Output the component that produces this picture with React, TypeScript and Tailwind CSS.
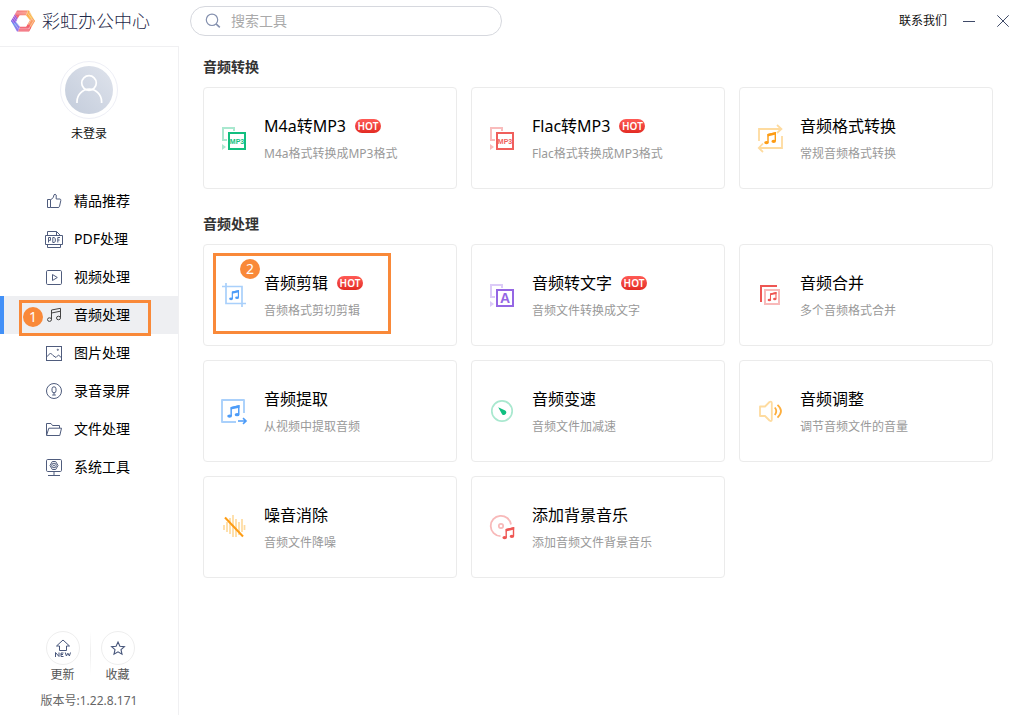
import type { ReactNode } from "react";

function Note({ x, y, s, color }: { x: number; y: number; s: number; color: string }) {
  return (
    <g transform={`translate(${x} ${y}) scale(${s / 12})`}>
      <path d="M4 10.5V2.6L11.3 .9V9" fill="none" stroke={color} strokeWidth="1.4" />
      <path d="M3.6 1.9L12 0V2.6L3.6 4.4Z" fill={color} />
      <ellipse cx="2.5" cy="10.6" rx="2.3" ry="1.6" fill={color} />
      <ellipse cx="9.7" cy="9.3" rx="2.3" ry="1.6" fill={color} />
    </g>
  );
}

function ConvertIcon({ light, dark, label, size }: { light: string; dark: string; label: string; size: number }) {
  return (
    <>
      <path d="M7 16H3V4H14V7" fill="none" stroke={light} strokeWidth="2" />
      <path d="M2 20L6 23L2 26Z" fill={light} />
      <rect x="9" y="9" width="16" height="16" fill="#fff" stroke={dark} strokeWidth="2" />
      <text
        x="17"
        y={17 + size * 0.36}
        textAnchor="middle"
        fontSize={size}
        fontWeight="700"
        fontFamily="Liberation Sans, sans-serif"
        fill={dark}
      >
        {label}
      </text>
    </>
  );
}

const toolIcons: Record<string, ReactNode> = {
  m4a: <ConvertIcon light="#a9e8cf" dark="#12bf7f" label="MP3" size={7} />,
  flac: <ConvertIcon light="#f9bcbc" dark="#f05f5c" label="MP3" size={7} />,
  text: <ConvertIcon light="#dccbf8" dark="#9567e4" label="A" size={14} />,
  format: (
    <>
      <path
        d="M3 17V5H25M21 1L25.4 5L21 9M26 12V24H3M7 19.5L2.8 24L7 28"
        fill="none"
        stroke="#fedb9f"
        strokeWidth="1.8"
      />
      <Note x={8} y={8} s={12} color="#fd9c14" />
    </>
  ),
  crop: (
    <>
      <path d="M6 2V22.5H26M2 5.5H22V26" fill="none" stroke="#a9d0fb" strokeWidth="1.7" />
      <Note x={9} y={9} s={10} color="#4d9cf8" />
    </>
  ),
  merge: (
    <>
      <path d="M5 21V5H21" fill="none" stroke="#ee5653" strokeWidth="2" />
      <rect x="9" y="9" width="14" height="14" fill="none" stroke="#f8b9b9" strokeWidth="2" />
      <Note x={11.5} y={11} s={9} color="#ee5653" />
    </>
  ),
  extract: (
    <>
      <path d="M16 25H2V3H24V16" fill="none" stroke="#a9d0fb" strokeWidth="1.9" strokeLinejoin="round" />
      <Note x={7} y={8} s={12.5} color="#4d9cf8" />
      <path d="M18 24H26M23 21.2L26 24L23 26.8" fill="none" stroke="#4d9cf8" strokeWidth="1.6" />
    </>
  ),
  speed: (
    <>
      <circle cx="14" cy="14" r="10.2" fill="none" stroke="#a9e8cf" strokeWidth="1.7" />
      <path d="M10.2 10.3L17.2 13.4A2.5 2.5 0 0 1 14.2 17.4Z" fill="#10bf80" />
    </>
  ),
  volume: (
    <>
      <path
        d="M4 9.5H9L13.5 5Q15.8 4 15.8 6V22.5Q15.8 25 13.5 23.5L9 19H4Z"
        fill="none"
        stroke="#fedb9f"
        strokeWidth="1.8"
        strokeLinejoin="round"
      />
      <path d="M18.8 10.5Q21.8 14 18.8 18M21.5 7.8Q28.5 14 21.5 20.6" fill="none" stroke="#fdae3c" strokeWidth="1.8" />
    </>
  ),
  noise: (
    <>
      <path
        d="M4 12V17M7 9V19M10 5V21M13 2V24M16 6V24M19 9V22M22 6V19M24.5 12V17"
        fill="none"
        stroke="#fedb9f"
        strokeWidth="1.7"
      />
      <path d="M5 4.5L23 23.5" stroke="#fd9c14" strokeWidth="2" />
    </>
  ),
  disc: (
    <>
      <path d="M12.5 23.2A10.2 10.2 0 1 1 23 11.5" fill="none" stroke="#f8b9b9" strokeWidth="1.8" />
      <circle cx="13" cy="13" r="2.2" fill="none" stroke="#f8b9b9" strokeWidth="1.7" />
      <Note x={14.2} y={14} s={12} color="#ee5653" />
    </>
  ),
};

const navIcons: Record<string, ReactNode> = {
  like: (
    <path d="M2.5 7.5H5.5V15.5H2.5ZM5.5 8L8.3 5.5L9 2.8Q10.2 1.6 11.2 3V7H15Q16 7.2 15.8 8.5L14.5 14.5Q14.2 15.5 13 15.5H5.5" />
  ),
  pdf: (
    <>
      <path d="M2.5 5.5V1.5H11.5L15.5 5.5V5.5M11.5 1.5V5.5M2.5 14V17.5H15.5V14" />
      <path d="M.5 5.5H17.5V14.5H.5Z" />
      <path d="M3.5 12.5V7.5H5.5V10.3H3.5M7.8 7.5V12.5H9L10.3 11.5V8.5L9 7.5ZM12.8 12.5V7.5H15M12.8 10H14.6" />
    </>
  ),
  video: (
    <>
      <rect x="1.5" y="2.5" width="15" height="14" rx="1.2" />
      <path d="M7.5 6.5L12.3 9.5L7.5 12.5Z" />
    </>
  ),
  music: (
    <>
      <path d="M6.5 13.5V4L15.5 2.3V11.5M6.5 7L15.5 5.2" />
      <ellipse cx="4.5" cy="13.6" rx="2" ry="1.8" />
      <ellipse cx="13.5" cy="12" rx="2" ry="1.8" />
    </>
  ),
  picture: (
    <>
      <rect x="1.5" y="2.5" width="15" height="14" />
      <path d="M1.8 12.8L5.5 9L8 11.5L11 13.5L13.5 11L16.2 13.5" />
      <circle cx="12.8" cy="5.8" r=".6" />
    </>
  ),
  mic: (
    <>
      <circle cx="9" cy="9" r="7.5" />
      <rect x="7" y="4.8" width="4" height="6" rx="2" />
      <path d="M9 10.8V12.8M7.2 13H10.8" />
    </>
  ),
  folder: <path d="M1.5 15V3.5H6L7.5 5.5H14.5V8M1.5 15.5L3.8 8.2H16.5L14.8 15.5Z" />,
  system: (
    <>
      <rect x="1.5" y="1.5" width="15" height="12" rx="1.2" />
      <path d="M9 13.5V17M3 17.5H15M7.3 3.5H10.7L13 7.5L10.7 11.5H7.3L5 7.5Z" />
      <circle cx="9" cy="7.5" r="2.3" />
      <circle cx="9" cy="7.5" r=".6" />
    </>
  ),
};

const navItems = [
  { icon: "like", label: "精品推荐" },
  { icon: "pdf", label: "PDF处理" },
  { icon: "video", label: "视频处理" },
  { icon: "music", label: "音频处理", active: true },
  { icon: "picture", label: "图片处理" },
  { icon: "mic", label: "录音录屏" },
  { icon: "folder", label: "文件处理" },
  { icon: "system", label: "系统工具" },
];

type Tool = { icon: string; title: string; desc: string; hot?: boolean; step?: number };

const sections: { title: string; tools: Tool[] }[] = [
  {
    title: "音频转换",
    tools: [
      { icon: "m4a", title: "M4a转MP3", desc: "M4a格式转换成MP3格式", hot: true },
      { icon: "flac", title: "Flac转MP3", desc: "Flac格式转换成MP3格式", hot: true },
      { icon: "format", title: "音频格式转换", desc: "常规音频格式转换" },
    ],
  },
  {
    title: "音频处理",
    tools: [
      { icon: "crop", title: "音频剪辑", desc: "音频格式剪切剪辑", hot: true, step: 2 },
      { icon: "text", title: "音频转文字", desc: "音频文件转换成文字", hot: true },
      { icon: "merge", title: "音频合并", desc: "多个音频格式合并" },
      { icon: "extract", title: "音频提取", desc: "从视频中提取音频" },
      { icon: "speed", title: "音频变速", desc: "音频文件加减速" },
      { icon: "volume", title: "音频调整", desc: "调节音频文件的音量" },
      { icon: "noise", title: "噪音消除", desc: "音频文件降噪" },
      { icon: "disc", title: "添加背景音乐", desc: "添加音频文件背景音乐" },
    ],
  },
];

function Logo() {
  return (
    <svg viewBox="0 0 26 24" className="h-6 w-[26px]" aria-hidden="true">
      <defs>
        <linearGradient id="lg-left" x1="0" y1="0" x2="0" y2="1">
          <stop offset="0" stopColor="#b054c8" />
          <stop offset="1" stopColor="#7a5cf0" />
        </linearGradient>
        <linearGradient id="lg-low" x1="0" y1="0" x2="1" y2="1">
          <stop offset="0" stopColor="#48b4f4" />
          <stop offset="1" stopColor="#a767e8" />
        </linearGradient>
        <linearGradient id="lg-top" x1="0" y1="0" x2="1" y2="0">
          <stop offset="0" stopColor="#f0607a" />
          <stop offset="1" stopColor="#fb8a66" />
        </linearGradient>
        <linearGradient id="lg-right" x1="0" y1="0" x2="1" y2="1">
          <stop offset="0" stopColor="#fba14e" />
          <stop offset="1" stopColor="#fbd155" />
        </linearGradient>
      </defs>
      <path d="M7 1.5H18L16 6.3H9.7L7.6 9.5L4.8 5.2Z" fill="url(#lg-top)" />
      <path d="M18 1.5H19L25 12L22.5 14.5L16 6.3Z" fill="url(#lg-right)" />
      <path d="M19.4 12L22 8.8L25 12L19 22.5L16.4 17.5Z" fill="#fa9a62" />
      <path d="M19 22.5H8L10 17.7H16.3L18.4 14.5L21.2 18.8Z" fill="#f2606e" />
      <path d="M8 22.5H7L1 12L3.5 9.5L10 17.7Z" fill="url(#lg-low)" />
      <path d="M1 12L4.9 5.2L7.6 9.5L6.5 12L4.2 15.2Z" fill="url(#lg-left)" />
      <path
        d="M6 3.2H18M5 4.9H17M3 9L9.5 17.5M2 11L8.5 20M17.5 4L23.5 12M19 3L25 11M9 19.3H20M8.5 21H19.5M21.5 10L18 16M23.5 12L18.5 20M4 7L7 11.5"
        stroke="#fff"
        strokeWidth=".6"
        opacity=".65"
      />
    </svg>
  );
}

function StepBadge({ n, className }: { n: number; className: string }) {
  return (
    <span
      className={`absolute flex size-5 items-center justify-center rounded-full bg-[#f98939] text-sm leading-5 text-white ${className}`}
    >
      {n}
    </span>
  );
}

function ToolCard({ tool }: { tool: Tool }) {
  return (
    <button
      type="button"
      className="relative flex h-[102px] items-center gap-4 rounded border border-[#ebebeb] bg-white pl-4 text-left"
    >
      <svg viewBox="0 0 28 28" className="size-7 shrink-0 overflow-visible" aria-hidden="true">
        {toolIcons[tool.icon]}
      </svg>
      <span className="flex flex-col gap-1.5 pt-0.5">
        <span className="flex items-center gap-[9px]">
          <span className="text-base leading-6 text-black">{tool.title}</span>
          {tool.hot && (
            <span className="flex h-[14px] w-[26px] items-center justify-center rounded-full bg-linear-to-b from-[#ff5a55] to-[#e32a22] text-[10px] leading-[14px] font-semibold text-white">
              HOT
            </span>
          )}
        </span>
        <span className="text-xs leading-5 text-[#999]">{tool.desc}</span>
      </span>
      {tool.step && (
        <>
          <span className="absolute top-2 left-[9px] h-[81px] w-[178px] border-3 border-[#f98939]" />
          <StepBadge n={tool.step} className="top-[14px] left-9" />
        </>
      )}
    </button>
  );
}

export default function App() {
  return (
    <div className="flex min-h-screen bg-white font-['Noto_Sans','Noto_Sans_CJK_SC',sans-serif] text-black">
      <aside className="flex w-[179px] shrink-0 flex-col">
        <div className="flex h-[47px] items-center gap-1.5 border-b border-[#f0f0f2] pb-1 pl-[10px]">
          <Logo />
          <h1 className="text-lg leading-6 font-light whitespace-nowrap text-[#1f2a4a]">彩虹办公中心</h1>
        </div>
        <div className="flex flex-1 flex-col border-r border-[#f0f0f2] pt-[14px] pb-1">
          <button type="button" className="flex flex-col items-center gap-1.5 self-center">
            <span className="flex size-[58px] items-center justify-center rounded-full border border-[#eeeff6]">
              <span className="flex size-12 items-center justify-center rounded-full bg-linear-to-tr from-[#c3ccdb] to-[#dfe3ec]">
                <svg viewBox="0 0 48 48" className="size-12" fill="none" stroke="#fff" strokeWidth="1.7" aria-hidden="true">
                  <circle cx="24" cy="17" r="7.3" />
                  <path d="M12 37V35.5A12.3 12.3 0 0 1 36.6 35.5V37" />
                </svg>
              </span>
            </span>
            <span className="text-xs leading-[18px] text-[#111]">未登录</span>
          </button>
          <nav className="mt-[39px] flex flex-col">
            {navItems.map((item) => (
              <a
                key={item.label}
                href="#"
                className={`relative flex h-[38px] items-center gap-[11px] border-l-4 pl-[41px] text-sm leading-5 ${
                  item.active ? "border-[#4290f7] bg-[#eeeff2]" : "border-transparent"
                }`}
              >
                <svg
                  viewBox="0 0 18 18"
                  className={`size-[18px] ${item.active ? "text-[#444]" : "text-[#4f5c7d]"}`}
                  fill="none"
                  stroke="currentColor"
                  strokeWidth="1"
                  aria-hidden="true"
                >
                  {navIcons[item.icon]}
                </svg>
                {item.label}
                {item.active && (
                  <>
                    <span className="absolute top-1 left-[15px] h-9 w-[132px] border-3 border-[#f98939]" />
                    <StepBadge n={1} className="top-[11px] left-[19px]" />
                  </>
                )}
              </a>
            ))}
          </nav>
          <div className="mt-auto flex justify-center gap-2.5 pt-4 pl-0.5">
            <button type="button" className="flex flex-col items-center text-xs text-[#555]">
              <span className="flex size-[34px] items-center justify-center rounded-full border border-[#eee]">
                <svg viewBox="0 0 18 18" className="size-[18px]" fill="none" stroke="#46557a" aria-hidden="true">
                  <path d="M9 1L15.5 7H12.5V11.5H5.5V7H2.5Z" />
                  <path d="M1.5 18V13.5L5 17.5V13.5M9.5 14H7V17.5H9.5M7 15.5H9M11.3 13.5L12.4 17L13.9 14.2L15.4 17L16.5 13.5" />
                </svg>
              </span>
              <span className="leading-5">更新</span>
            </button>
            <span className="h-11 w-px bg-linear-to-b from-transparent via-[#eee] to-transparent" />
            <button type="button" className="flex flex-col items-center text-xs text-[#555]">
              <span className="flex size-[34px] items-center justify-center rounded-full border border-[#eee]">
                <svg viewBox="0 0 18 18" className="size-[18px]" fill="none" stroke="#46557a" strokeWidth="1.1" aria-hidden="true">
                  <path d="M9 3L10.9 7.2L15.4 7.6L12 10.6L13 15.2L9 12.8L5 15.2L6 10.6L2.6 7.6L7.1 7.2Z" />
                </svg>
              </span>
              <span className="leading-5">收藏</span>
            </button>
          </div>
          <p className="mt-1.5 text-center text-xs leading-5 text-[#666]">版本号:1.22.8.171</p>
        </div>
      </aside>

      <div className="flex min-w-0 flex-1 flex-col">
        <header className="flex h-[42px] items-center pr-[15px] pl-[11px]">
          <label className="flex h-[30px] w-[312px] items-center gap-2.5 rounded-full border border-[#d6d8de] pl-[14px]">
            <svg viewBox="0 0 16 16" className="size-4 shrink-0" fill="none" stroke="#8490ae" strokeWidth="1.2" aria-hidden="true">
              <circle cx="7" cy="6.8" r="5.7" />
              <path d="M11 10.8L14.8 14.4" strokeWidth="1.6" />
            </svg>
            <input
              type="text"
              aria-label="搜索工具"
              placeholder="搜索工具"
              className="min-w-0 flex-1 bg-transparent text-sm leading-5 outline-none placeholder:text-[#aaa]"
            />
          </label>
          <a href="#" className="ml-auto text-xs leading-5 text-[#111]">
            联系我们
          </a>
          <button type="button" aria-label="最小化" className="ml-4">
            <svg viewBox="0 0 12 12" className="size-3" stroke="#3f4a68" aria-hidden="true">
              <path d="M0 6.5H12" />
            </svg>
          </button>
          <button type="button" aria-label="关闭" className="ml-[22px]">
            <svg viewBox="0 0 12 12" className="size-3" stroke="#3f4a68" aria-hidden="true">
              <path d="M.3 .3L11.7 11.7M11.7 .3L.3 11.7" />
            </svg>
          </button>
        </header>
        <main className="flex flex-col gap-[25px] pt-[15px] pr-[31px] pb-6 pl-6">
          {sections.map((section) => (
            <section key={section.title}>
              <h2 className="text-sm leading-5 font-bold text-[#333]">{section.title}</h2>
              <div className="mt-2.5 grid grid-cols-3 gap-[14px]">
                {section.tools.map((tool) => (
                  <ToolCard key={tool.title} tool={tool} />
                ))}
              </div>
            </section>
          ))}
        </main>
      </div>
    </div>
  );
}
